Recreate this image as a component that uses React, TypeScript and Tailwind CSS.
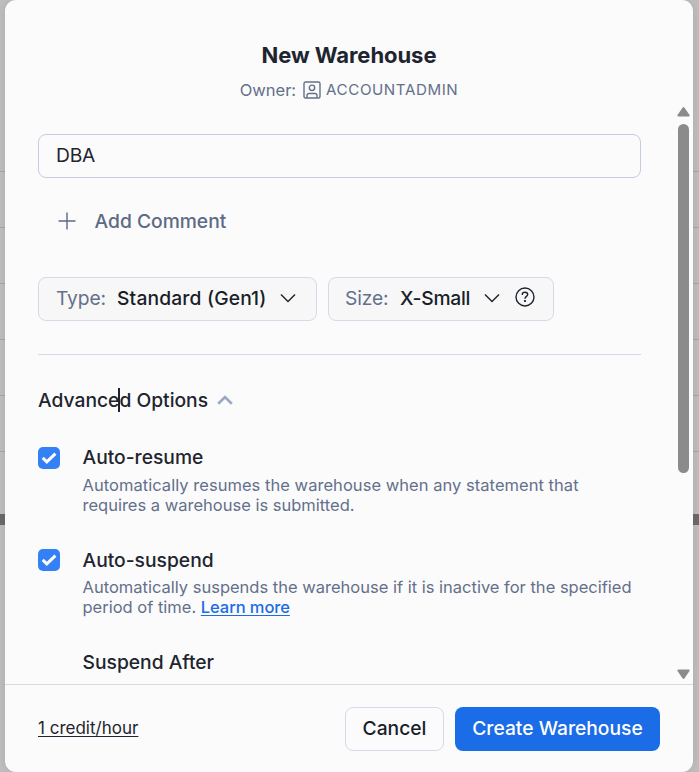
import type { ReactNode } from "react";

const ROW_COUNT = 6;

function Backdrop() {
  return (
    <div className="absolute inset-0 bg-[#c0c0c0]">
      <div className="h-[116px]" />
      {Array.from({ length: ROW_COUNT }, (_, i) => (
        <div key={i} className="h-14 border-b border-[#a6a7ab]" />
      ))}
      <div className="h-[62px]" />
      <div className="h-[11px] bg-[#6c6c6c]" />
    </div>
  );
}

function Chevron({ className }: { className: string }) {
  return (
    <svg viewBox="0 0 16 10" className={className} fill="none" stroke="currentColor">
      <path d="M1 1.5 8 8.5 15 1.5" />
    </svg>
  );
}

function Checkbox() {
  return (
    <span className="flex size-[22px] shrink-0 items-center justify-center rounded-[5px] bg-[#3480f6] text-white">
      <svg viewBox="0 0 22 22" className="size-[22px]" fill="none" stroke="currentColor" strokeWidth="2.9">
        <path d="m4.7 10.9 4.1 4L17.4 6.6" />
      </svg>
    </span>
  );
}

function Option({ title, titleClass, children }: { title: string; titleClass: string; children: ReactNode }) {
  return (
    <div className="flex gap-[22.5px]">
      <Checkbox />
      <div>
        <div className={`text-[19.25px] leading-5 font-medium text-[#1e252f] ${titleClass}`}>{title}</div>
        <div className="text-[16.5px] leading-5 whitespace-nowrap text-[#64708b]">{children}</div>
      </div>
    </div>
  );
}

export default function App() {
  return (
    <div className="relative h-[772px] w-[699px] overflow-hidden font-['Inter',sans-serif]">
      <Backdrop />
      <div className="relative mr-[6px] ml-[5px] flex h-[772px] flex-col overflow-hidden rounded-[11px] bg-[#fbfbfb] shadow-[0_0_12px_rgba(0,0,0,0.12)]">
        <header className="flex h-[104px] flex-col items-center pt-[41px]">
          <h1 className="text-[22px] leading-7 font-bold tracking-[-0.06px] text-[#1e252f]">New Warehouse</h1>
          <div className="mt-[9px] flex h-6 items-center text-[16.5px] text-[#64708b]">
            <span>Owner:</span>
            <svg viewBox="0 0 18 18" className="ml-[7px] size-[18px]" fill="none" stroke="currentColor" strokeWidth="1.4">
              <rect x="1" y="1" width="16" height="16" rx="1.5" />
              <circle cx="9" cy="6.8" r="2.7" />
              <path d="M4 16.5v-2a2 2 0 0 1 2-2h6a2 2 0 0 1 2 2v2" />
            </svg>
            <span className="ml-[5px] text-[15.125px] tracking-[0.6px]">ACCOUNTADMIN</span>
          </div>
        </header>

        <div className="flex h-[580px] overflow-hidden">
          <main className="ml-[33px] w-[603px] shrink-0 pt-[30px]">
            <div className="flex h-11 items-center rounded-lg border border-[#c6cce0] pb-0.5 pl-[17px] text-[19.25px] tracking-[-0.25px] text-[#1e252f]">DBA</div>
            <div className="mt-[31px] flex h-6 items-center pl-5 text-[#5d6a85]">
              <svg viewBox="0 0 18 18" className="size-[18px]" fill="none" stroke="currentColor" strokeWidth="1.4">
                <path d="M9 .5v17M.5 9h17" />
              </svg>
              <span className="ml-[18.5px] text-[19.25px] font-medium">Add Comment</span>
            </div>

            <div className="mt-11 flex gap-[11px] text-[19.25px]">
              <div className="flex h-11 w-[279px] items-center rounded-lg border border-[#d5d9e8] bg-[#f7f7f7] pb-0.5 pl-[17px]">
                <span className="w-[61px] tracking-[-0.12px] text-[#64708b]">Type:</span>
                <span className="w-[163px] font-medium tracking-[0.15px] text-[#191e28]">Standard (Gen1)</span>
                <Chevron className="h-[10px] w-4 stroke-[1.5] text-[#1e252f]" />
              </div>
              <div className="flex h-11 w-[226px] items-center rounded-lg border border-[#d5d9e8] bg-[#f7f7f7] pb-0.5 pl-[16px]">
                <span className="w-[55px] tracking-[-0.12px] text-[#64708b]">Size:</span>
                <span className="w-[84px] font-medium tracking-[-0.25px] text-[#191e28]">X-Small</span>
                <Chevron className="h-[10px] w-4 stroke-[1.5] text-[#1e252f]" />
                <svg viewBox="0 0 20 20" className="mb-0.5 ml-[15px] size-5 text-[#1e252f]" fill="none" stroke="currentColor" strokeWidth="1.4">
                  <circle cx="10" cy="10" r="9" />
                  <path d="M7.3 8V7.4C7.3 6.2 8.3 5.3 10 5.3s2.7 1 2.7 2.3c0 1.8-2.7 1.9-2.7 4.1" />
                  <path d="M10 13.1v1.8" strokeWidth="1.8" />
                </svg>
              </div>
            </div>

            <hr className="mt-[33px] border-[#d5d9e8]" />

            <div className="mt-[33px] flex h-6 items-center text-[19.25px] leading-6 font-medium text-[#1e252f]">
              <span className="relative">
                Advanced Options
                <span className="absolute top-0 left-[80px] h-6 w-[2px] bg-[#1e252f]" />
              </span>
              <svg viewBox="0 0 16 10" className="ml-[9px] h-[10px] w-4 text-[#9ba8c1]" fill="none" stroke="currentColor" strokeWidth="2.8">
                <path d="m1.2 8.7 6.8-6.6 6.8 6.6" />
              </svg>
            </div>

            <div className="mt-[35px]">
              <Option title="Auto-resume" titleClass="mb-2">
                <span className="tracking-[0.04px]">Automatically resumes the warehouse when any statement that</span>
                <br />
                requires a warehouse is submitted.
              </Option>
            </div>
            <div className="mt-[34px]">
              <Option title="Auto-suspend" titleClass="mt-px mb-[7px]">
                Automatically suspends the warehouse if it is inactive for the specified
                <br />
                period of time.{" "}
                <span className="font-medium tracking-[-0.08px] text-[#1a6ce7] underline underline-offset-2">Learn more</span>
              </Option>
            </div>
            <div className="mt-[35px] ml-[44.5px] text-[19.25px] leading-5 font-medium text-[#1e252f]">Suspend After</div>
          </main>

          <div className="ml-auto flex w-[19px] flex-col items-center pt-[3px]">
            <svg viewBox="0 0 13 10" className="h-[10px] w-[13px] fill-[#8b8b8b]">
              <path d="M5.5.7q1-1.2 2 0l5 7.3q.6 1.5-1 1.5h-10q-1.6 0-1-1.5Z" />
            </svg>
            <div className="mt-[7px] h-[349px] w-[11px] rounded-full bg-[#8b8b8b]" />
            <svg viewBox="0 0 13 10" className="mt-[196px] h-[10px] w-[13px] rotate-180 fill-[#8b8b8b]">
              <path d="M5.5.7q1-1.2 2 0l5 7.3q.6 1.5-1 1.5h-10q-1.6 0-1-1.5Z" />
            </svg>
          </div>
        </div>

        <footer className="flex h-[88px] items-center border-t border-[#d5dae4] pr-[33px] pl-[33px] text-[19.25px]">
          <span className="text-[17px] text-[#1e252f] underline underline-offset-2">1 credit/hour</span>
          <button className="ml-auto h-11 w-[99px] rounded-lg border border-[#d5d9e8] pb-px font-medium text-[#191e28]">Cancel</button>
          <button className="ml-[11px] h-11 w-[205px] rounded-lg bg-[#1a6ce7] pb-px font-medium text-white">Create Warehouse</button>
        </footer>
      </div>
    </div>
  );
}
